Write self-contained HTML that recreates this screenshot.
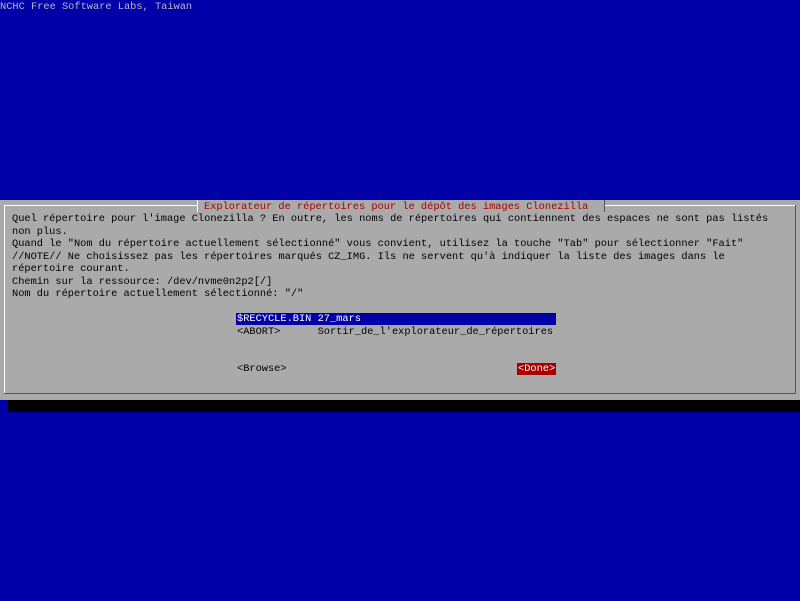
<!DOCTYPE html>
<html><head><meta charset="utf-8"><style>
html,body{margin:0;padding:0;}
body{width:800px;height:601px;background:#0000a8;position:relative;overflow:hidden;font-family:"Liberation Mono",monospace;font-size:10.33px;}
.t{position:absolute;white-space:pre;line-height:12.5px;height:12.5px;color:#000;}
#box{position:absolute;left:0;top:200px;width:800px;height:200px;background:#aaa;}
#shadow{position:absolute;left:8px;top:400px;width:792px;height:12px;background:#000;}
.hl{position:absolute;}
</style></head><body>
<div class="t" style="left:0;top:1px;color:#b8b8c8">NCHC Free Software Labs, Taiwan</div>
<div id="box"></div>
<div id="shadow"></div>
<div class="hl" style="left:4px;top:205px;width:194px;height:1px;background:#fff"></div>
<div class="hl" style="left:604px;top:205px;width:192px;height:1px;background:#fff"></div>
<div class="hl" style="left:4px;top:205px;width:1px;height:189px;background:#fff"></div>
<div class="hl" style="left:4px;top:393px;width:792px;height:1px;background:#555"></div>
<div class="hl" style="left:795px;top:205px;width:1px;height:189px;background:#555"></div>
<div class="hl" style="left:197px;top:200px;width:1px;height:12px;background:#fff"></div>
<div class="hl" style="left:604px;top:200px;width:1px;height:12px;background:#555"></div>
<div class="t" style="left:204px;top:201px;color:#a80000">Explorateur de répertoires pour le dépôt des images Clonezilla</div>
<div class="t" style="left:12px;top:213px">Quel répertoire pour l'image Clonezilla ? En outre, les noms de répertoires qui contiennent des espaces ne sont pas listés</div>
<div class="t" style="left:12px;top:225.5px">non plus.</div>
<div class="t" style="left:12px;top:238px">Quand le "Nom du répertoire actuellement sélectionné" vous convient, utilisez la touche "Tab" pour sélectionner "Fait"</div>
<div class="t" style="left:12px;top:250.5px">//NOTE// Ne choisissez pas les répertoires marqués CZ_IMG. Ils ne servent qu'à indiquer la liste des images dans le</div>
<div class="t" style="left:12px;top:263px">répertoire courant.</div>
<div class="t" style="left:12px;top:275.5px">Chemin sur la ressource: /dev/nvme0n2p2[/]</div>
<div class="t" style="left:12px;top:288px">Nom du répertoire actuellement sélectionné: "/"</div>
<div class="hl" style="left:236px;top:313px;width:320px;height:12px;background:#0000a8"></div>
<div class="t" style="left:237px;top:313px;color:#fff">$RECYCLE.BIN 27_mars</div>
<div class="t" style="left:237px;top:325.5px">&lt;ABORT&gt;      Sortir_de_l'explorateur_de_répertoires</div>
<div class="t" style="left:237px;top:363px">&lt;Browse&gt;</div>
<div class="hl" style="left:517px;top:363px;width:39px;height:12px;background:#a80000"></div>
<div class="t" style="left:518px;top:363px;color:#fff">&lt;Done&gt;</div>
</body></html>
